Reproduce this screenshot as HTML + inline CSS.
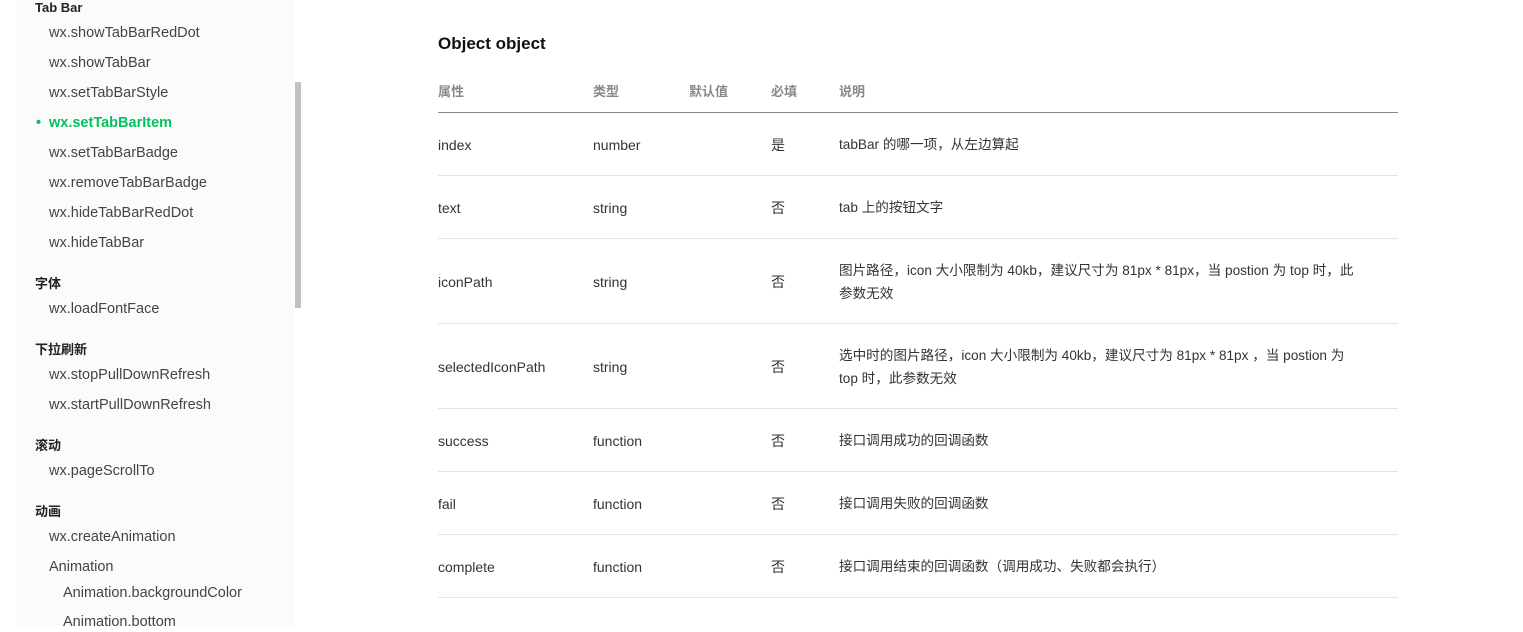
<!DOCTYPE html>
<html><head><meta charset="utf-8"><style>
body{margin:0;width:1523px;height:626px;overflow:hidden;background:#fff;font-family:"Liberation Sans","Noto Sans CJK SC",sans-serif;color:#333;position:relative}
.sb{position:absolute;left:16px;top:0;width:278px;height:626px;background:#fbfbfb}
.sc{position:absolute;left:295px;top:82px;width:6px;height:226px;background:#c1c1c1}
.t{position:absolute;white-space:nowrap;line-height:20px;transform:translateY(-9px)}
.h{font-size:13px;font-weight:bold;color:#222;left:35px}
.i{font-size:14.5px;color:#444;left:49px}
.a{color:#07c160;font-weight:bold}
.g{font-size:13px;font-weight:bold;color:#888}
.c{font-size:14px;color:#333}
.d{font-size:13.6px;left:839px}
.l{position:absolute;left:438px;width:960px;height:1px;background:#e5e5e5}
</style></head><body>
<div class="sb"></div><div class="sc"></div>
<div class="t h" style="top:7px">Tab Bar</div>
<div class="t i" style="top:32px">wx.showTabBarRedDot</div>
<div class="t i" style="top:62px">wx.showTabBar</div>
<div class="t i" style="top:92px">wx.setTabBarStyle</div>
<div class="t i a" style="top:122px;left:36px">•</div>
<div class="t i a" style="top:122px">wx.setTabBarItem</div>
<div class="t i" style="top:152px">wx.setTabBarBadge</div>
<div class="t i" style="top:182px">wx.removeTabBarBadge</div>
<div class="t i" style="top:212px">wx.hideTabBarRedDot</div>
<div class="t i" style="top:242px">wx.hideTabBar</div>
<div class="t h" style="top:283px">字体</div>
<div class="t i" style="top:308px">wx.loadFontFace</div>
<div class="t h" style="top:349px">下拉刷新</div>
<div class="t i" style="top:374px">wx.stopPullDownRefresh</div>
<div class="t i" style="top:404px">wx.startPullDownRefresh</div>
<div class="t h" style="top:445px">滚动</div>
<div class="t i" style="top:470px">wx.pageScrollTo</div>
<div class="t h" style="top:511px">动画</div>
<div class="t i" style="top:536px">wx.createAnimation</div>
<div class="t i" style="top:566px">Animation</div>
<div class="t i" style="top:592px;left:63px">Animation.backgroundColor</div>
<div class="t i" style="top:621px;left:63px">Animation.bottom</div>

<div class="t" style="top:43px;left:438px;font-size:17px;font-weight:bold;color:#111">Object object</div>
<div class="t g" style="top:91px;left:438px">属性</div>
<div class="t g" style="top:91px;left:593px">类型</div>
<div class="t g" style="top:91px;left:689px">默认值</div>
<div class="t g" style="top:91px;left:771px">必填</div>
<div class="t g" style="top:91px;left:839px">说明</div>
<div class="l" style="top:112px;background:#888"></div>

<div class="t c" style="top:144px;left:438px">index</div><div class="t c" style="top:144px;left:593px">number</div><div class="t c" style="top:144px;left:771px">是</div><div class="t c d" style="top:144px">tabBar 的哪一项，从左边算起</div>
<div class="l" style="top:175px"></div>
<div class="t c" style="top:207px;left:438px">text</div><div class="t c" style="top:207px;left:593px">string</div><div class="t c" style="top:207px;left:771px">否</div><div class="t c d" style="top:207px">tab 上的按钮文字</div>
<div class="l" style="top:238px"></div>
<div class="t c" style="top:281px;left:438px">iconPath</div><div class="t c" style="top:281px;left:593px">string</div><div class="t c" style="top:281px;left:771px">否</div>
<div class="t c d" style="top:270px">图片路径，icon 大小限制为 40kb，建议尺寸为 81px * 81px，当 postion 为 top 时，此</div>
<div class="t c d" style="top:293px">参数无效</div>
<div class="l" style="top:323px"></div>
<div class="t c" style="top:366px;left:438px">selectedIconPath</div><div class="t c" style="top:366px;left:593px">string</div><div class="t c" style="top:366px;left:771px">否</div>
<div class="t c d" style="top:355px">选中时的图片路径，icon 大小限制为 40kb，建议尺寸为 81px * 81px ，当 postion 为</div>
<div class="t c d" style="top:378px">top 时，此参数无效</div>
<div class="l" style="top:408px"></div>
<div class="t c" style="top:440px;left:438px">success</div><div class="t c" style="top:440px;left:593px">function</div><div class="t c" style="top:440px;left:771px">否</div><div class="t c d" style="top:440px">接口调用成功的回调函数</div>
<div class="l" style="top:471px"></div>
<div class="t c" style="top:503px;left:438px">fail</div><div class="t c" style="top:503px;left:593px">function</div><div class="t c" style="top:503px;left:771px">否</div><div class="t c d" style="top:503px">接口调用失败的回调函数</div>
<div class="l" style="top:534px"></div>
<div class="t c" style="top:566px;left:438px">complete</div><div class="t c" style="top:566px;left:593px">function</div><div class="t c" style="top:566px;left:771px">否</div><div class="t c d" style="top:566px">接口调用结束的回调函数（调用成功、失败都会执行）</div>
<div class="l" style="top:597px"></div>
</body></html>
